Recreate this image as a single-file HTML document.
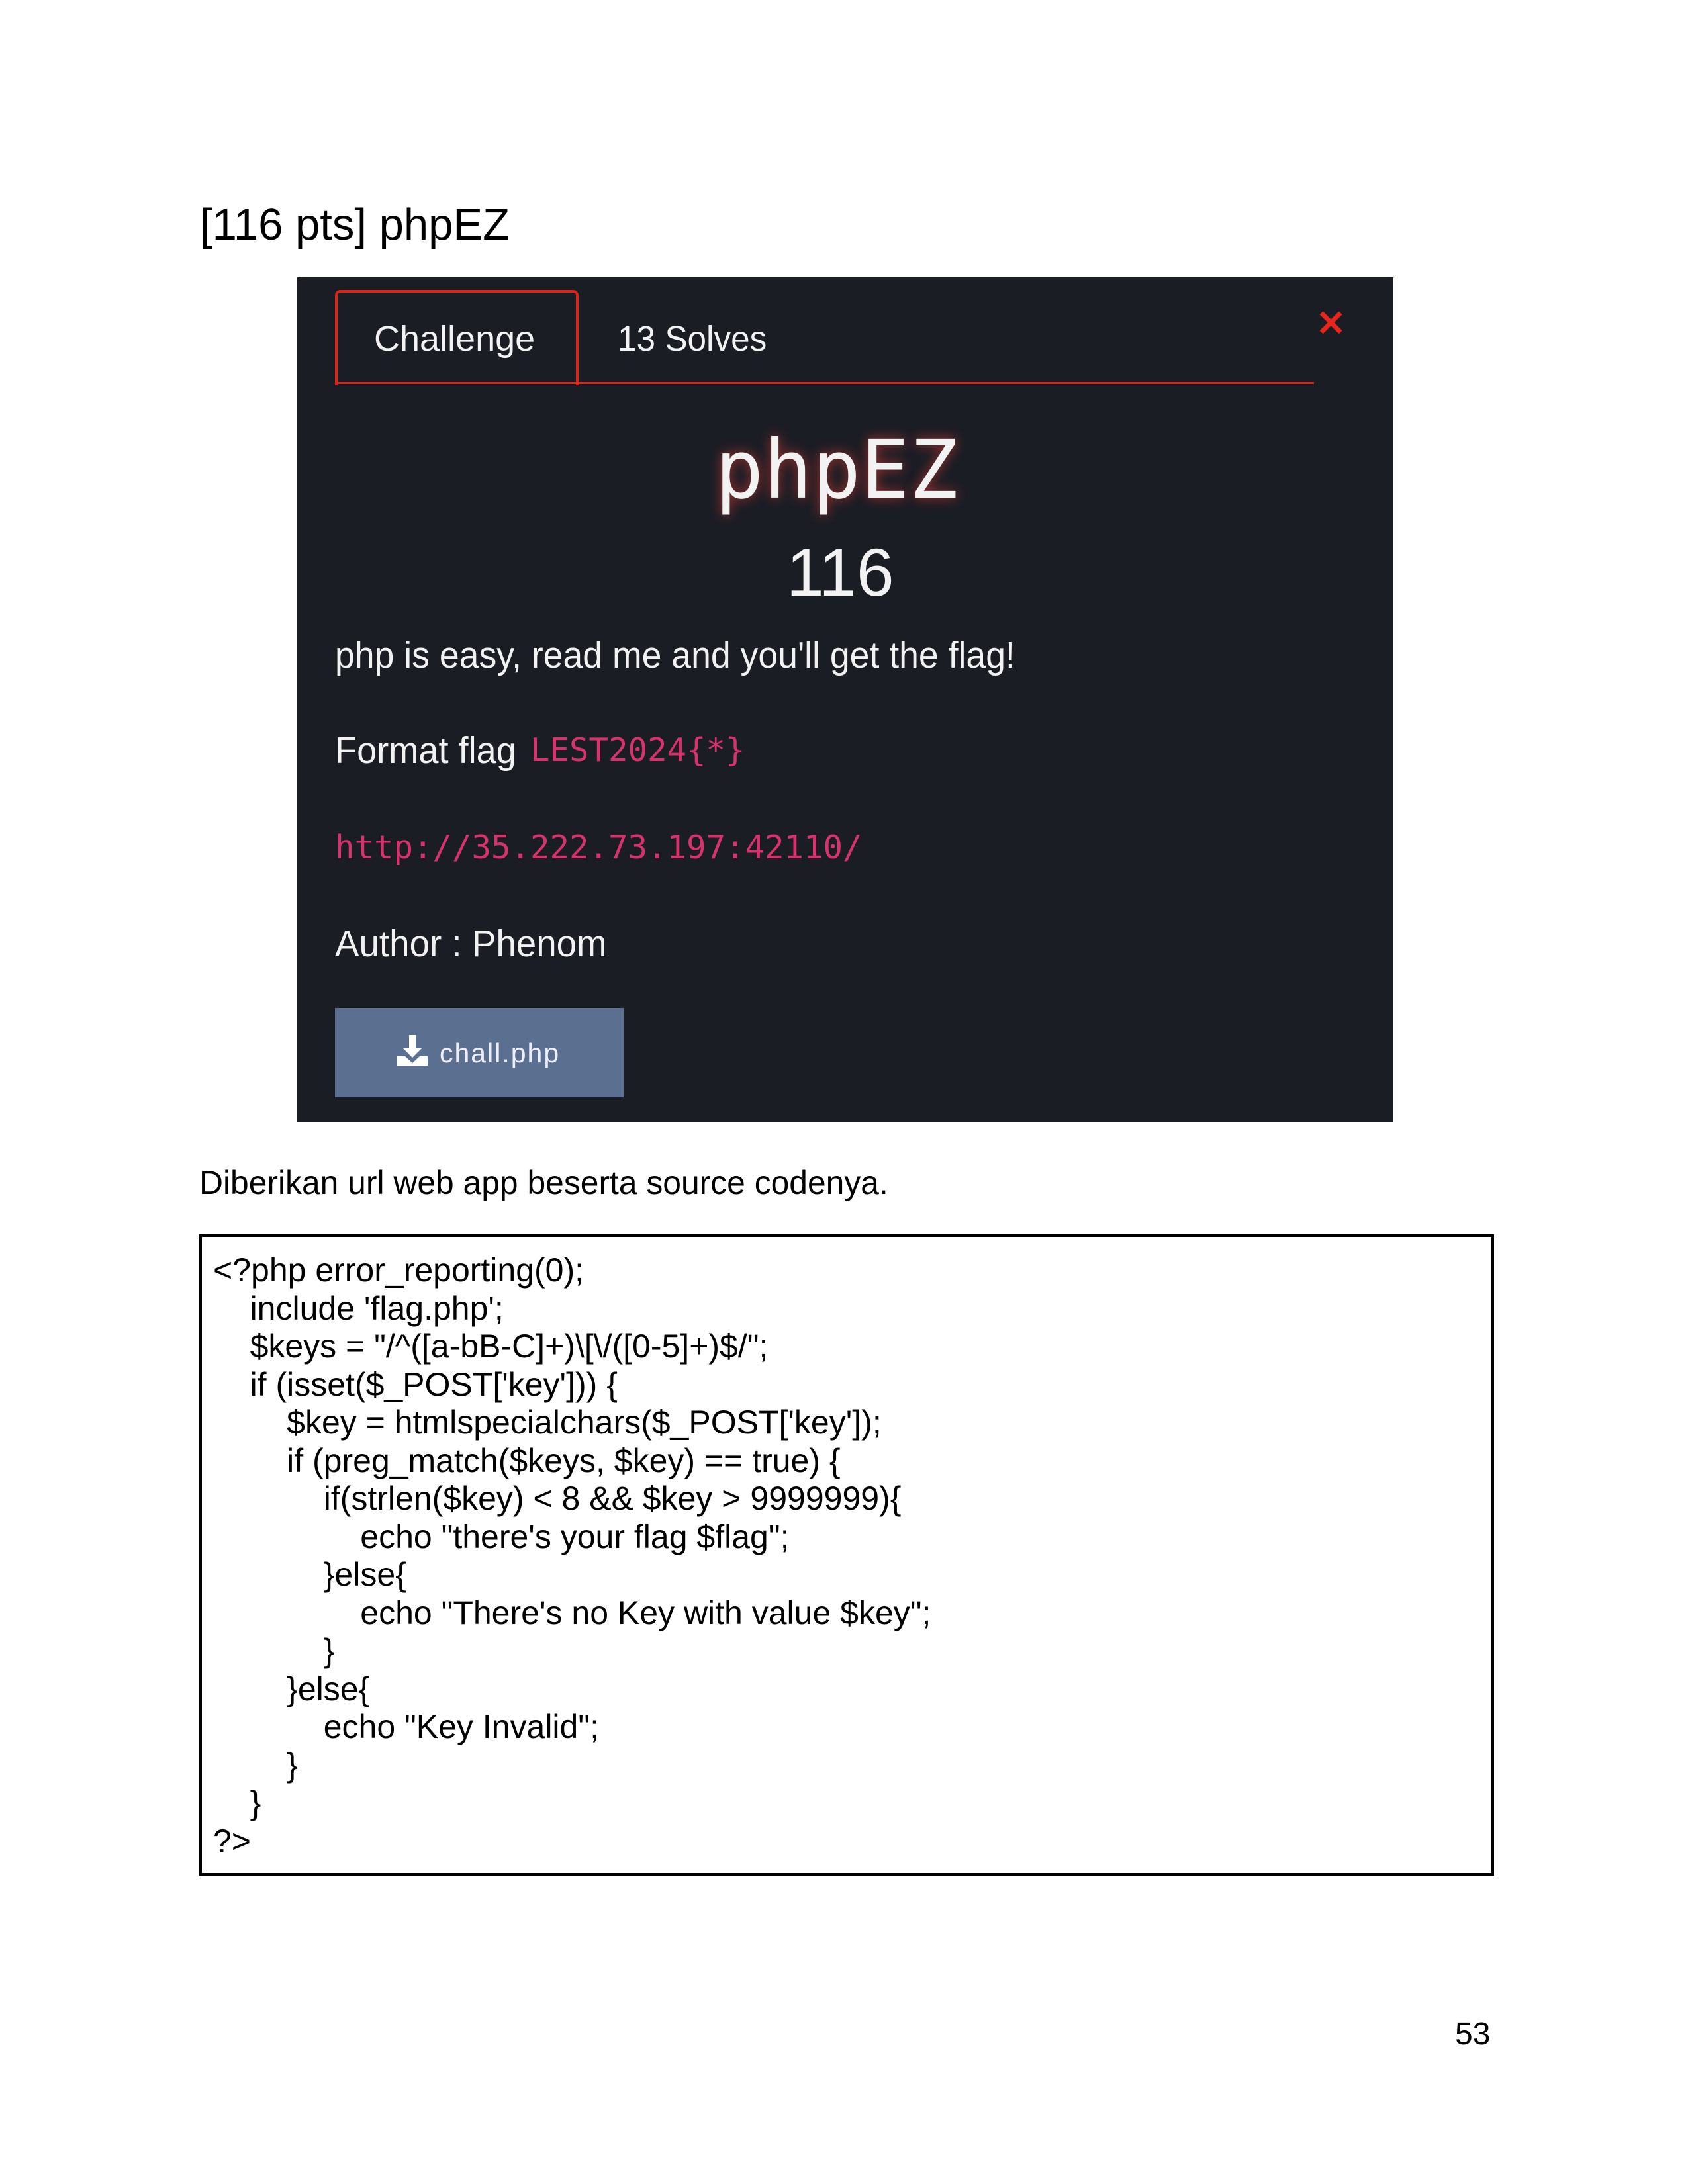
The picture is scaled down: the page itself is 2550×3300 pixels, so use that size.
<!DOCTYPE html>
<html><head><meta charset="utf-8"><style>
html,body{margin:0;padding:0;background:#fff;}
body{width:2550px;height:3300px;position:relative;overflow:hidden;font-family:"Liberation Sans",Arial,sans-serif;}
.a{position:absolute;white-space:nowrap;}
#panel{position:absolute;left:449px;top:419px;width:1656px;height:1277px;background:#1b1d25;}
.w{color:#f2f2f2;}
.mono{font-family:"DejaVu Sans Mono","Liberation Mono",monospace;}
.pink{color:#d6336c;}
.code{position:absolute;left:301px;top:1865px;width:1948px;height:961px;border:4px solid #000;}
.code div{position:absolute;font-size:50px;line-height:57.5px;white-space:pre;color:#000;}
</style></head><body>
<div class="a" style="left:302px;top:300px;font-size:67px;line-height:80px;">[116 pts] phpEZ</div>
<div id="panel"></div>
<div class="a" style="left:506px;top:438px;width:360px;height:140px;border:4px solid #d8241b;border-bottom:none;border-radius:8px 8px 0 0;"></div>
<div class="a" style="left:506px;top:577px;width:1479px;height:3px;background:#d8241b;"></div>
<div class="a w" style="left:565px;top:478px;font-size:54px;line-height:68px;">Challenge</div>
<div class="a w" style="left:933px;top:478px;font-size:54px;line-height:68px;transform:scaleX(0.95);transform-origin:left;">13 Solves</div>
<div class="a" style="left:1988px;top:462px;font-size:54px;line-height:54px;color:#e8261c;font-weight:bold;">✕</div>
<div class="a w mono" style="left:1080px;top:640px;font-size:122px;line-height:140px;text-shadow:0 0 18px rgba(230,60,50,.7);">phpEZ</div>
<div class="a w" style="left:1188px;top:810px;font-size:102px;line-height:110px;">116</div>
<div class="a w" style="left:506px;top:955px;font-size:57px;line-height:70px;transform:scaleX(0.94);transform-origin:left;">php is easy, read me and you'll get the flag!</div>
<div class="a w" style="left:506px;top:1099px;font-size:57px;line-height:70px;transform:scaleX(0.95);transform-origin:left;">Format flag</div>
<div class="a mono pink" style="left:801px;top:1104px;font-size:49px;line-height:60px;">LEST2024{*}</div>
<div class="a mono pink" style="left:506px;top:1251px;font-size:49px;line-height:60px;">http://35.222.73.197:42110/</div>
<div class="a w" style="left:506px;top:1391px;font-size:57px;line-height:70px;transform:scaleX(0.96);transform-origin:left;">Author : Phenom</div>
<div class="a" style="left:506px;top:1523px;width:436px;height:135px;background:#5b7090;"></div>
<svg class="a" style="left:598px;top:1562px;" width="50" height="50" viewBox="0 0 50 50"><path d="M20 2h10v20h9L25 36 11 22h9z" fill="#fff"/><path d="M2 34h12l11 10 11-10h12v14H2z" fill="#fff"/></svg>
<div class="a" style="left:664px;top:1563px;font-size:41px;line-height:56px;color:#eef;letter-spacing:2px;">chall.php</div>
<div class="a" style="left:301px;top:1758px;font-size:49.8px;line-height:58px;">Diberikan url web app beserta source codenya.</div>
<div class="code">
<div style="left:17px;top:22px;">&lt;?php error_reporting(0);
    include 'flag.php';
    $keys = "/^([a-bB-C]+)\[\/([0-5]+)$/";
    if (isset($_POST['key'])) {
        $key = htmlspecialchars($_POST['key']);
        if (preg_match($keys, $key) == true) {
            if(strlen($key) &lt; 8 &amp;&amp; $key &gt; 9999999){
                echo "there's your flag $flag";
            }else{
                echo "There's no Key with value $key";
            }
        }else{
            echo "Key Invalid";
        }
    }
?&gt;</div>
</div>
<div class="a" style="left:2198px;top:3045px;font-size:48px;line-height:58px;">53</div>
</body></html>
